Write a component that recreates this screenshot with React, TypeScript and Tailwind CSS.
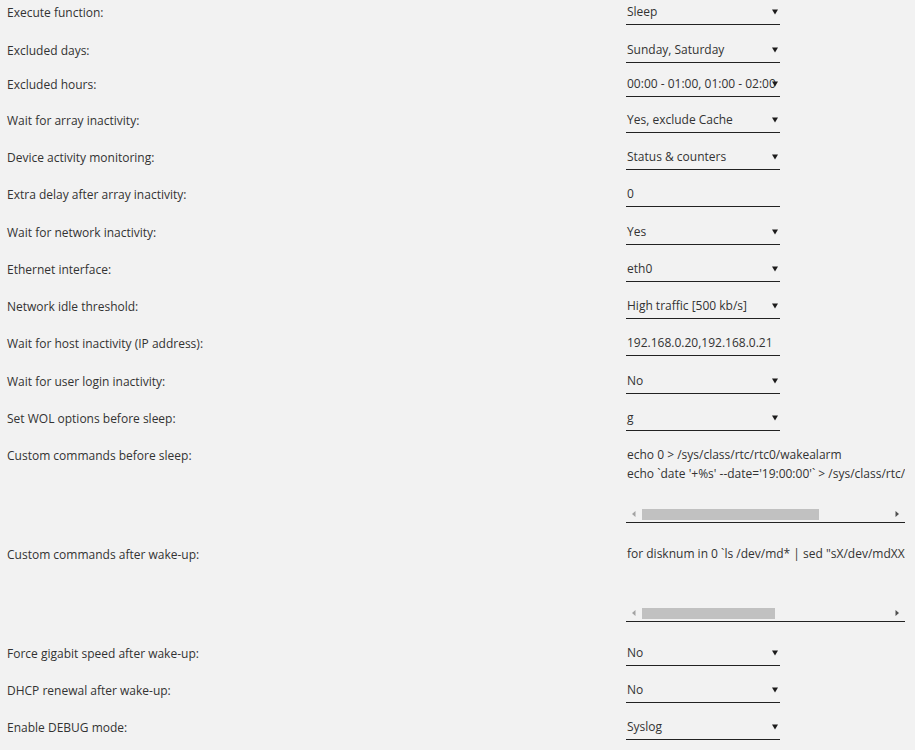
const fields: { label: string; value: string; kind: "select" | "input"; h: string }[] = [
  { label: "Execute function:", value: "Sleep", kind: "select", h: "h-[38px]" },
  { label: "Excluded days:", value: "Sunday, Saturday", kind: "select", h: "h-[34px]" },
  { label: "Excluded hours:", value: "00:00 - 01:00, 01:00 - 02:00", kind: "select", h: "h-[36px]" },
  { label: "Wait for array inactivity:", value: "Yes, exclude Cache", kind: "select", h: "h-[37px]" },
  { label: "Device activity monitoring:", value: "Status & counters", kind: "select", h: "h-[37px]" },
  { label: "Extra delay after array inactivity:", value: "0", kind: "input", h: "h-[38px]" },
  { label: "Wait for network inactivity:", value: "Yes", kind: "select", h: "h-[37px]" },
  { label: "Ethernet interface:", value: "eth0", kind: "select", h: "h-[37px]" },
  { label: "Network idle threshold:", value: "High traffic [500 kb/s]", kind: "select", h: "h-[37px]" },
  { label: "Wait for host inactivity (IP address):", value: "192.168.0.20,192.168.0.21", kind: "input", h: "h-[38px]" },
  { label: "Wait for user login inactivity:", value: "No", kind: "select", h: "h-[37px]" },
  { label: "Set WOL options before sleep:", value: "g", kind: "select", h: "h-[37px]" },
];

const tail = [
  { label: "Force gigabit speed after wake-up:", value: "No" },
  { label: "DHCP renewal after wake-up:", value: "No" },
  { label: "Enable DEBUG mode:", value: "Syslog" },
];

function Field({ value, kind }: { value: string; kind: "select" | "input" }) {
  return (
    <div className="relative w-[154px] h-[21px] border-b border-[#222] overflow-hidden">
      <span className="block pl-px pr-[10px] whitespace-nowrap overflow-hidden leading-[16px]">{value}</span>
      {kind === "select" && (
        <svg className="absolute right-[2px] top-[5px]" width="6" height="6" viewBox="0 0 6 6">
          <path d="M0 0.5H6L3 5.5Z" fill="#1c1b1b" />
        </svg>
      )}
    </div>
  );
}

function Commands({ lines, thumb }: { lines: string[]; thumb: number }) {
  return (
    <div className="w-[279px] h-[78px] border-b border-[#222] flex flex-col">
      <div className="flex-1 overflow-hidden whitespace-pre leading-[19px] pl-px">
        {lines.map((l) => (
          <div key={l}>{l}</div>
        ))}
      </div>
      <div className="h-[12px] mb-[2px] flex items-center">
        <svg className="mx-[5px]" width="6" height="6" viewBox="0 0 6 6">
          <path d="M4.5 0V6L1 3Z" fill="#a3a3a3" />
        </svg>
        <div className="flex-1 h-[11px] relative">
          <div className="absolute left-0 top-0 h-[11px] bg-[#c1c1c1]" style={{ width: thumb }} />
        </div>
        <svg className="mx-[5px]" width="6" height="6" viewBox="0 0 6 6">
          <path d="M1.5 0V6L5 3Z" fill="#505050" />
        </svg>
      </div>
    </div>
  );
}

function Row({ label, children, h }: { label: string; children: React.ReactNode; h: string }) {
  return (
    <div className={`flex items-start ${h}`}>
      <div className="w-[626px] pl-[7px] leading-[16px] pt-[1px]">{label}</div>
      <div>{children}</div>
    </div>
  );
}

export default function App() {
  return (
    <div
      className="min-h-[750px] w-[915px] overflow-hidden bg-[#f2f2f2] text-[#333] text-[12px] pt-[4px]"
      style={{ fontFamily: '"Open Sans", "Noto Sans", sans-serif' }}
    >
      {fields.map((f) => (
        <Row key={f.label} label={f.label} h={f.h}>
          <Field value={f.value} kind={f.kind} />
        </Row>
      ))}
      <Row label="Custom commands before sleep:" h="h-[99px]">
        <div className="-mt-[2px]">
          <Commands
            lines={[
              "echo 0 > /sys/class/rtc/rtc0/wakealarm",
              "echo `date '+%s' --date='19:00:00'` > /sys/class/rtc/rtc0/wakealarm",
            ]}
            thumb={177}
          />
        </div>
      </Row>
      <Row label="Custom commands after wake-up:" h="h-[99px]">
        <div className="-mt-[2px]">
          <Commands lines={['for disknum in 0 `ls /dev/md* | sed "sX/dev/mdXX"`; do']} thumb={133} />
        </div>
      </Row>
      {tail.map((f) => (
        <Row key={f.label} label={f.label} h="h-[37px]">
          <Field value={f.value} kind="select" />
        </Row>
      ))}
    </div>
  );
}
